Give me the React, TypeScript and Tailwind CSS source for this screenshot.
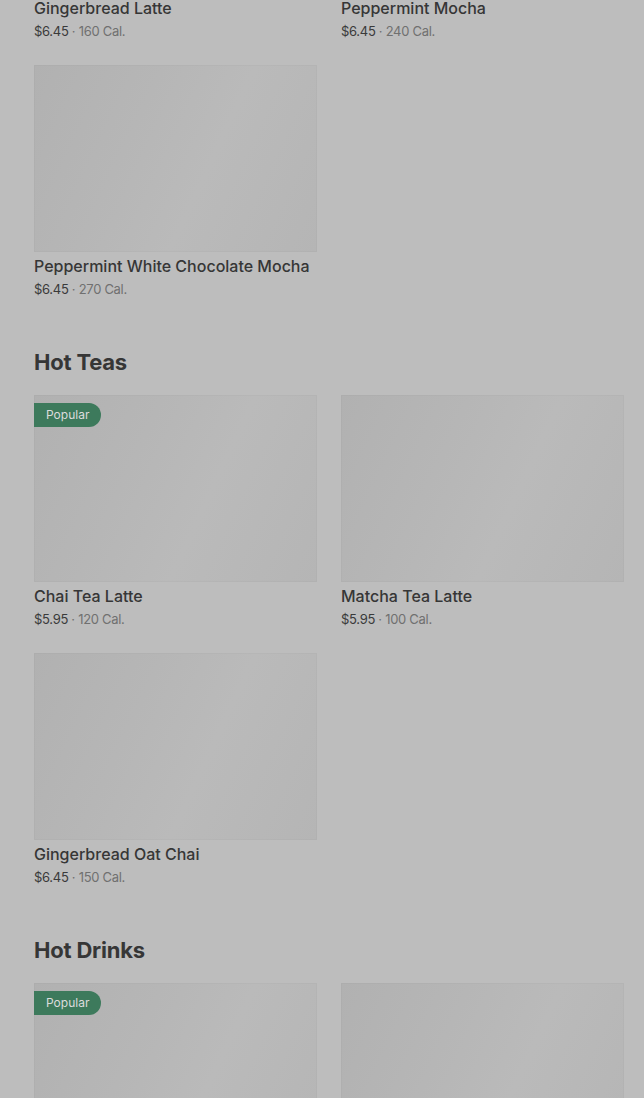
import React from "react";

type Item = { name: string; price: string; cal: string; popular?: boolean };

const sections: { title?: string; items: Item[] }[] = [
  {
    items: [
      { name: "Gingerbread Latte", price: "$6.45", cal: "160 Cal." },
      { name: "Peppermint Mocha", price: "$6.45", cal: "240 Cal." },
      { name: "Peppermint White Chocolate Mocha", price: "$6.45", cal: "270 Cal." },
    ],
  },
  {
    title: "Hot Teas",
    items: [
      { name: "Chai Tea Latte", price: "$5.95", cal: "120 Cal.", popular: true },
      { name: "Matcha Tea Latte", price: "$5.95", cal: "100 Cal." },
      { name: "Gingerbread Oat Chai", price: "$6.45", cal: "150 Cal." },
    ],
  },
  {
    title: "Hot Drinks",
    items: [
      { name: "Hot Chocolate", price: "$4.95", cal: "370 Cal.", popular: true },
      { name: "Steamed Milk", price: "$3.95", cal: "190 Cal." },
    ],
  },
];

function Card({ item }: { item: Item }) {
  return (
    <div className="flex flex-col">
      <div className="relative h-[187px] w-full bg-[linear-gradient(115deg,#b1b1b1_0%,#b6b6b6_35%,#bababa_60%,#b5b5b5_100%)] shadow-[inset_0_0_0_1px_rgba(0,0,0,0.02)]">
        {item.popular && (
          <div className="absolute left-0 top-[8px] flex h-[24px] items-center rounded-r-full bg-[#3d7a5c] pl-[12px] pr-[12px] text-[12px] leading-none text-[#dcdcdc]">
            Popular
          </div>
        )}
      </div>
      <div className="mt-[4px] text-[16px] leading-[20px] font-medium text-[#363636] whitespace-nowrap">
        {item.name}
      </div>
      <div className="mt-[4px] text-[13px] leading-[18px] tracking-[-0.3px] whitespace-nowrap">
        <span className="text-[#3a3a3a]">{item.price}</span>
        <span className="text-[#707070]"> · {item.cal}</span>
      </div>
    </div>
  );
}

export default function App() {
  return (
    <div
      className="h-[1098px] w-full overflow-hidden bg-[#bdbdbd]"
      style={{ fontFamily: "Inter, 'Noto Sans', sans-serif" }}
    >
      <div className="mt-[-193px] flex flex-col gap-[50px] pl-[34px]">
        {sections.map((s, i) => (
          <section key={i} className="flex flex-col">
            {s.title && (
              <h2 className="mb-[19px] text-[22px] leading-[28px] font-bold tracking-[-0.2px] text-[#363636]">
                {s.title}
              </h2>
            )}
            <div className="grid grid-cols-[283px_283px] gap-x-[24px] gap-y-[25px]">
              {s.items.map((it) => (
                <Card key={it.name} item={it} />
              ))}
            </div>
          </section>
        ))}
      </div>
    </div>
  );
}
